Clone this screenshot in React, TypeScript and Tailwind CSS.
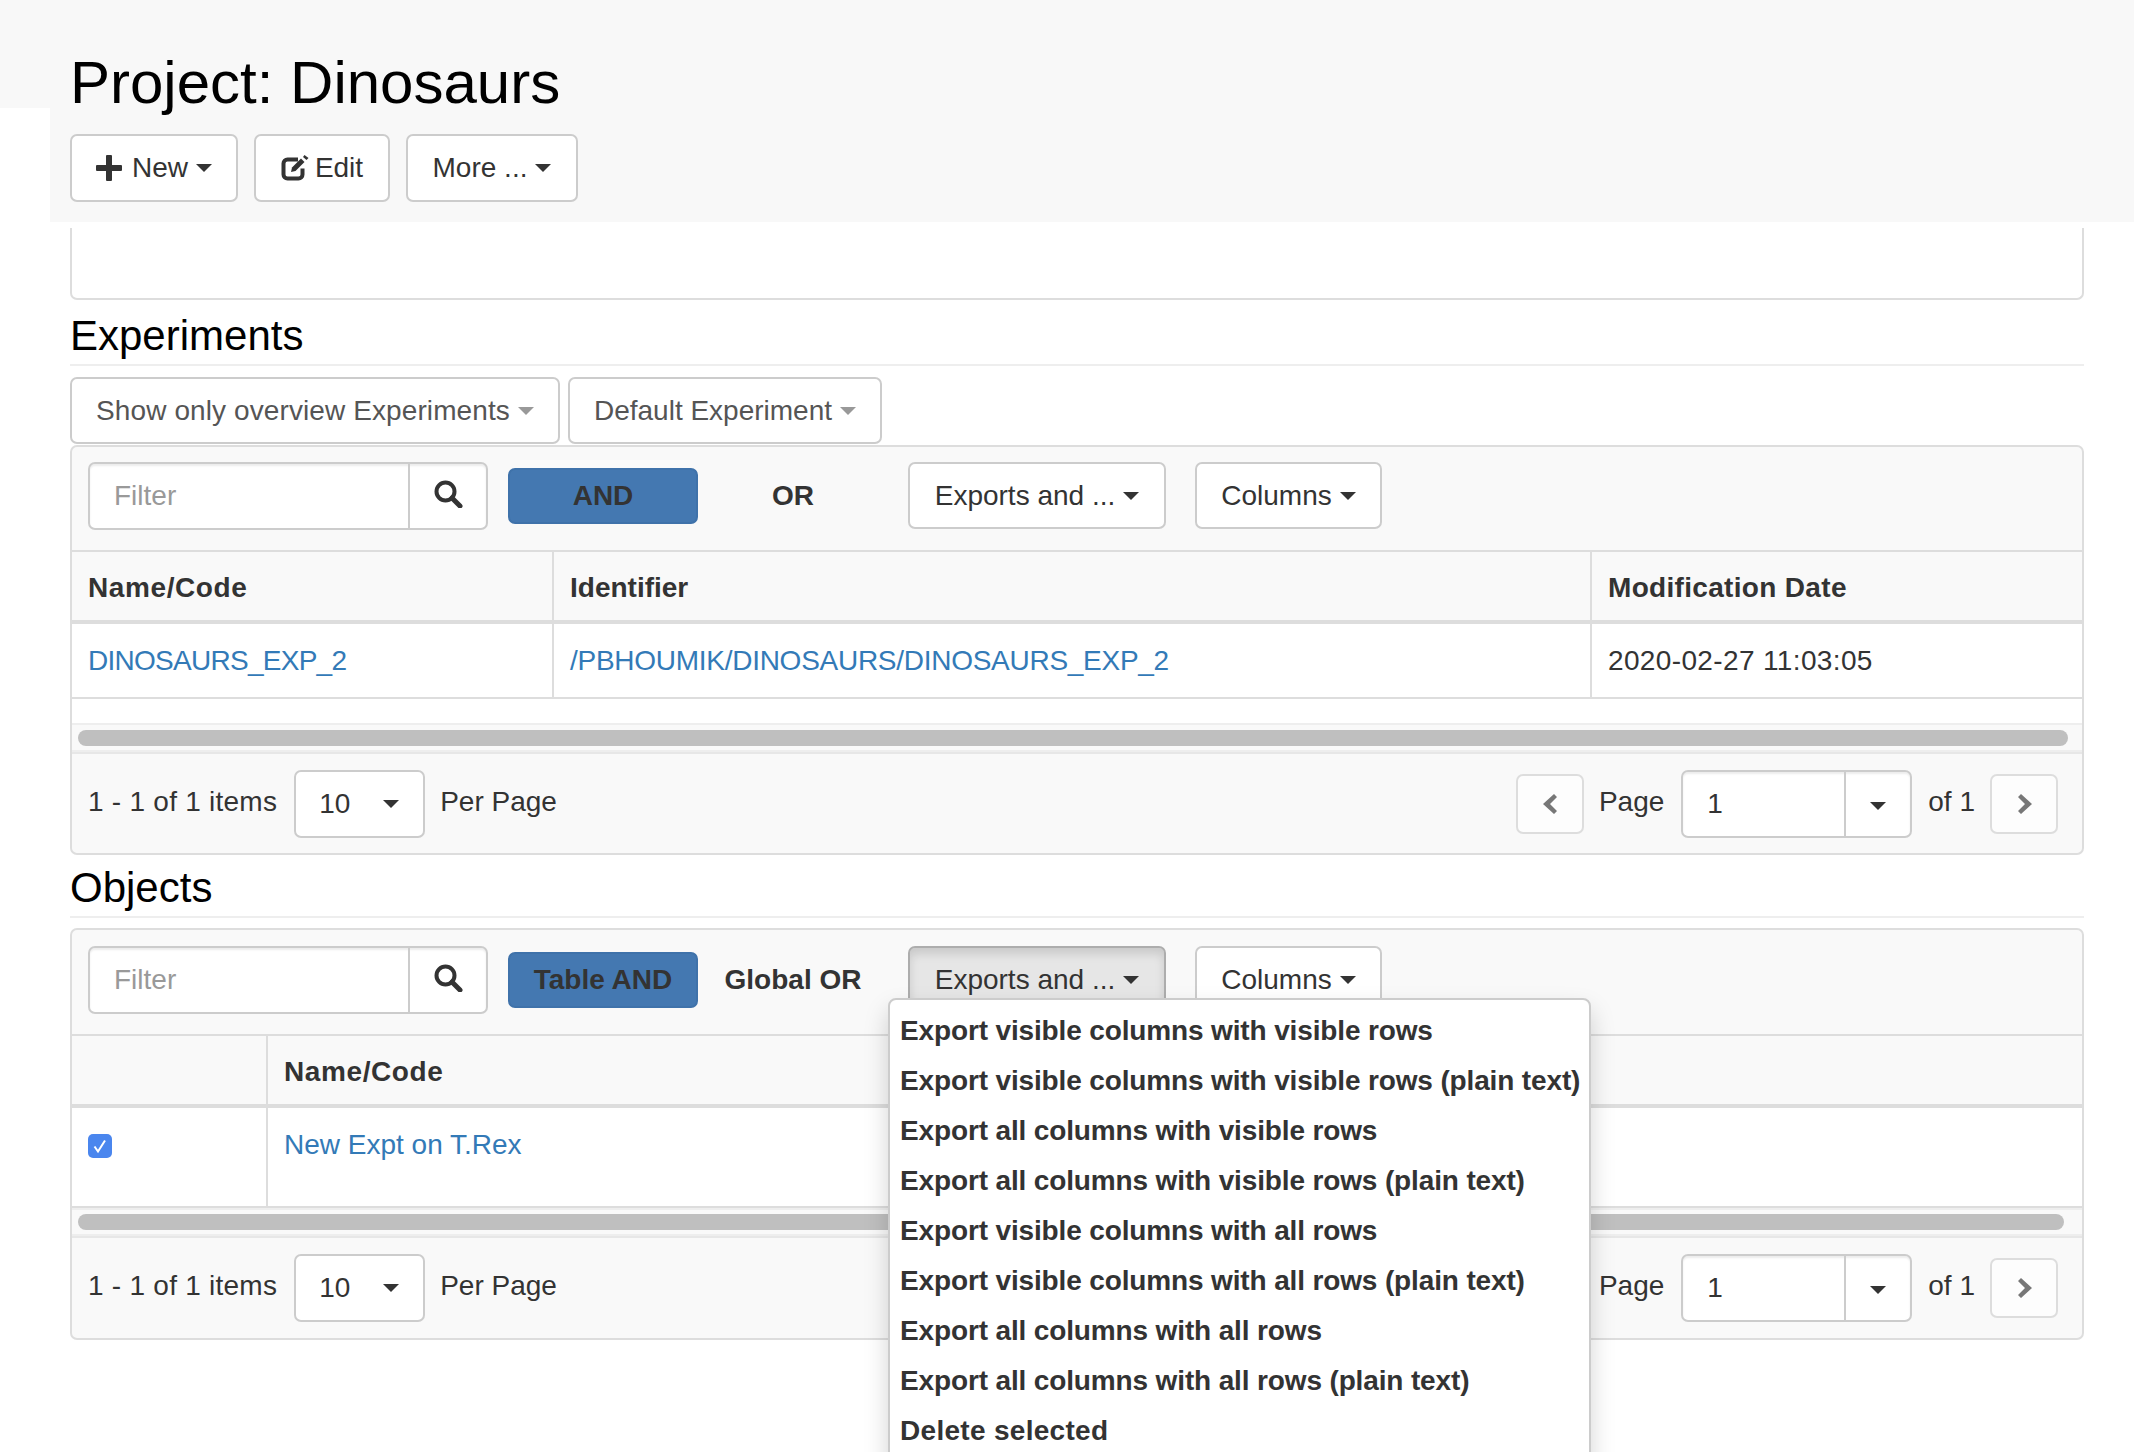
import type { ReactNode } from "react";

const EXPORTS = [
  "Export visible columns with visible rows",
  "Export visible columns with visible rows (plain text)",
  "Export all columns with visible rows",
  "Export all columns with visible rows (plain text)",
  "Export visible columns with all rows",
  "Export visible columns with all rows (plain text)",
  "Export all columns with all rows",
  "Export all columns with all rows (plain text)",
];

function Caret({ light }: { light?: boolean }) {
  return (
    <i
      className={`ml-[8px] inline-block h-0 w-0 border-x-[8px] border-t-[8px] border-x-transparent ${
        light ? "border-t-[#999]" : "border-t-[#333]"
      }`}
    />
  );
}

function Btn({ children, className = "", active }: { children: ReactNode; className?: string; active?: boolean }) {
  return (
    <div
      className={`flex shrink-0 items-center justify-center rounded-[7px] border-2 ${
        active ? "border-[#adadad] bg-[#e6e6e6] shadow-[inset_0_6px_10px_rgba(0,0,0,0.125)]" : "border-[#ccc] bg-white"
      } ${className}`}
    >
      {children}
    </div>
  );
}

function PlusIcon() {
  return (
    <svg viewBox="0 0 26 26" className="mr-[10px] h-[26px] w-[26px]">
      <path d="M10 1a1 1 0 0 1 1-1h4a1 1 0 0 1 1 1v9h9a1 1 0 0 1 1 1v4a1 1 0 0 1-1 1h-9v9a1 1 0 0 1-1 1h-4a1 1 0 0 1-1-1v-9H1a1 1 0 0 1-1-1v-4a1 1 0 0 1 1-1h9z" fill="#333" />
    </svg>
  );
}

function EditIcon() {
  return (
    <svg viewBox="0 0 28 26" className="mr-[6px] h-[26px] w-[28px]">
      <path d="M17 4.500H6.500a4 4 0 0 0-4 4v11a4 4 0 0 0 4 4h11a4 4 0 0 0 4-4v-6" fill="none" stroke="#333" strokeWidth="4" />
      <path d="M10 17l1-4.500 9-9 3.500 3.500-9 9z" fill="#333" />
      <path d="M22 2l1.500-2 4 3-2 2z" fill="#333" />
    </svg>
  );
}

function SearchIcon() {
  return (
    <svg viewBox="0 0 29 28" className="h-[28px] w-[29px]">
      <circle cx="11.500" cy="11.500" r="9" fill="none" stroke="#333" strokeWidth="4" />
      <path d="M18 18l8 8" stroke="#333" strokeWidth="5" strokeLinecap="round" />
    </svg>
  );
}

function Chevron({ dir }: { dir: "left" | "right" }) {
  return (
    <svg viewBox="0 0 17 22" className="h-[22px] w-[17px]">
      <path d={dir === "left" ? "M13 1l3 3-7 7 7 7-3 3L2 11z" : "M5 1L2 4l7 7-7 7 3 3 11-10z"} fill="#777" />
    </svg>
  );
}

function Filter() {
  return (
    <div className="flex h-[68px] w-[400px] shrink-0 rounded-[7px] border-2 border-[#ccc] bg-white shadow-[inset_0_2px_2px_rgba(0,0,0,0.075)]">
      <div className="flex flex-1 items-center border-r-2 border-[#ccc] pl-[24px] text-[#999]">Filter</div>
      <div className="flex w-[76px] items-center justify-center pb-[4px]">
        <SearchIcon />
      </div>
    </div>
  );
}

function Toolbar({ and, or, open }: { and: string; or: string; open?: boolean }) {
  return (
    <div className={`flex items-start border-b-2 border-[#ddd] px-[16px] ${open ? "h-[106px] pt-[16px]" : "h-[105px] pt-[15px]"}`}>
      <Filter />
      <div className="ml-[20px] mt-[6px] flex h-[56px] w-[190px] items-center justify-center rounded-[7px] border-2 border-[#3f72aa] bg-[#4478b1] font-bold">
        {and}
      </div>
      <div className="mt-[6px] flex h-[56px] w-[190px] items-center justify-center font-bold">{or}</div>
      <div className="relative ml-[20px]">
        <Btn active={open} className="h-[67px] w-[258px]">
          Exports and ...
          <Caret />
        </Btn>
        {open && <ExportMenu />}
      </div>
      <Btn className="ml-[29px] h-[67px] w-[187px]">
        Columns
        <Caret />
      </Btn>
    </div>
  );
}

function ExportMenu() {
  return (
    <div className="absolute left-[-20px] top-[52px] z-10 h-[500px] w-[703px] rounded-[8px] border-2 border-[#ccc] bg-white px-[10px] py-[6px] shadow-[0_12px_24px_rgba(0,0,0,0.175)]">
      {EXPORTS.map((label) => (
        <div key={label} className="flex h-[50px] items-center whitespace-nowrap font-bold tracking-[-0.14px]">
          {label}
        </div>
      ))}
      <div className="flex h-[50px] items-center whitespace-nowrap font-bold tracking-[0.3px]">Delete selected</div>
    </div>
  );
}

function Pager() {
  return (
    <div className="flex h-[99px] items-center justify-between rounded-b-[7px] bg-[#f9f9f9] pl-[16px] pr-[24px]">
      <div className="flex items-center">
        <span className="pb-[3px] tracking-[0.25px]">1 - 1 of 1 items</span>
        <div className="ml-[17px] flex h-[68px] w-[131px] items-center justify-between rounded-[7px] border-2 border-[#ccc] bg-white pl-[23px] pr-[24px]">
          <span>10</span>
          <i className="inline-block h-0 w-0 border-x-[8px] border-t-[8px] border-x-transparent border-t-[#333]" />
        </div>
        <span className="ml-[15px] pb-[3px]">Per Page</span>
      </div>
      <div className="flex items-center">
        <div className="flex h-[60px] w-[68px] items-center justify-center rounded-[7px] border-2 border-[#ddd] bg-[#fdfdfd]">
          <Chevron dir="left" />
        </div>
        <span className="ml-[15px] pb-[3px]">Page</span>
        <div className="ml-[17px] flex h-[68px] w-[231px] rounded-[7px] border-2 border-[#ccc] bg-white shadow-[inset_0_2px_2px_rgba(0,0,0,0.075)]">
          <div className="flex flex-1 items-center border-r-2 border-[#ccc] pl-[24px]">1</div>
          <div className="flex w-[64px] items-center justify-center pt-[4px]">
            <i className="inline-block h-0 w-0 border-x-[8px] border-t-[8px] border-x-transparent border-t-[#333]" />
          </div>
        </div>
        <span className="ml-[16px] pb-[3px]">of 1</span>
        <div className="ml-[15px] flex h-[60px] w-[68px] items-center justify-center rounded-[7px] border-2 border-[#ddd] bg-[#fdfdfd]">
          <Chevron dir="right" />
        </div>
      </div>
    </div>
  );
}

function Scrollbar({ height, right }: { height: string; right: string }) {
  return (
    <div className={`flex ${height} items-center border-y-2 border-[#eee] bg-[#f9f9f9] pl-[6px] ${right}`}>
      <div className="h-[16px] flex-1 rounded-full bg-[#bfbfbf]" />
    </div>
  );
}

function SectionTitle({ children, height }: { children: ReactNode; height: string }) {
  return (
    <div className={`flex ${height} items-end border-b-2 border-[#eee] pb-[4px]`}>
      <h3 className="text-[42px] leading-[48px] text-black">{children}</h3>
    </div>
  );
}

export default function App() {
  return (
    <div className="h-[1452px] overflow-hidden bg-white font-['Liberation_Sans',Arial,sans-serif] text-[28px] leading-[40px] text-[#333]">
      <header className="relative h-[222px] bg-[#f8f8f8] pl-[70px] pt-[51px]">
        <div className="absolute bottom-0 left-0 h-[114px] w-[50px] bg-white" />
        <h1 className="text-[60px] leading-[64px] text-black">Project: Dinosaurs</h1>
        <div className="mt-[19px] flex gap-[16px]">
          <Btn className="h-[68px] w-[168px]">
            <PlusIcon />
            New
            <Caret />
          </Btn>
          <Btn className="h-[68px] w-[136px]">
            <EditIcon />
            Edit
          </Btn>
          <Btn className="h-[68px] w-[172px]">
            More ...
            <Caret />
          </Btn>
        </div>
      </header>

      <main className="ml-[70px] w-[2014px]">
        <div className="mt-[6px] h-[72px] rounded-b-[7px] border-x-2 border-b-2 border-[#ddd]" />

        <SectionTitle height="h-[66px]">Experiments</SectionTitle>
        <div className="mt-[11px] flex gap-[8px] text-[#555]">
          <Btn className="h-[67px] w-[490px] tracking-[0.1px]">
            Show only overview Experiments
            <Caret light />
          </Btn>
          <Btn className="h-[67px] w-[314px]">
            Default Experiment
            <Caret light />
          </Btn>
        </div>

        <section className="mt-[1px] rounded-[7px] border-2 border-[#ddd] bg-[#f9f9f9]">
          <Toolbar and="AND" or="OR" />
          <div className="flex h-[72px] border-b-4 border-[#ddd] font-bold">
            <div className="flex w-[482px] items-center border-r-2 border-[#ddd] pl-[16px] pt-[3px] tracking-[0.6px]">Name/Code</div>
            <div className="flex w-[1038px] items-center border-r-2 border-[#ddd] pl-[16px] pt-[3px]">Identifier</div>
            <div className="flex flex-1 items-center pl-[16px] pt-[3px] tracking-[0.32px]">Modification Date</div>
          </div>
          <div className="flex h-[75px] border-b-2 border-[#ddd] bg-white">
            <div className="flex w-[482px] items-center border-r-2 border-[#ddd] pl-[16px] tracking-[-0.73px] text-[#337ab7]">DINOSAURS_EXP_2</div>
            <div className="flex w-[1038px] items-center border-r-2 border-[#ddd] pl-[16px] tracking-[-0.27px] text-[#337ab7]">/PBHOUMIK/DINOSAURS/DINOSAURS_EXP_2</div>
            <div className="flex flex-1 items-center pl-[16px] tracking-[0.36px]">2020-02-27 11:03:05</div>
          </div>
          <div className="h-[24px] bg-white" />
          <Scrollbar height="h-[29px]" right="pr-[14px]" />
          <div className="border-t-2 border-[#e7e7e7]" />
          <Pager />
        </section>

        <SectionTitle height="h-[63px]">Objects</SectionTitle>

        <section className="mt-[10px] rounded-[7px] border-2 border-[#ddd] bg-[#f9f9f9] pb-[1px]">
          <Toolbar and="Table AND" or="Global OR" open />
          <div className="flex h-[72px] border-b-4 border-[#ddd] font-bold">
            <div className="w-[196px] border-r-2 border-[#ddd]" />
            <div className="flex flex-1 items-center pl-[16px] pt-[3px] tracking-[0.6px]">Name/Code</div>
          </div>
          <div className="flex h-[100px] border-b-2 border-[#ddd] bg-white">
            <div className="w-[196px] border-r-2 border-[#ddd] pl-[16px] pt-[26px]">
              <div className="flex h-[24px] w-[24px] items-center justify-center rounded-[5px] bg-[#4a86ee]">
                <svg viewBox="0 0 24 24" className="h-[24px] w-[24px]">
                  <path d="M6.500 12.500l3.500 5 7-11" fill="none" stroke="#fff" strokeWidth="2" />
                </svg>
              </div>
            </div>
            <div className="flex-1 pl-[16px] pt-[17px] text-[#337ab7]">New Expt on T.Rex</div>
          </div>
          <Scrollbar height="h-[28px]" right="pr-[18px]" />
          <div className="border-t-2 border-[#e7e7e7]" />
          <Pager />
        </section>
      </main>
    </div>
  );
}
